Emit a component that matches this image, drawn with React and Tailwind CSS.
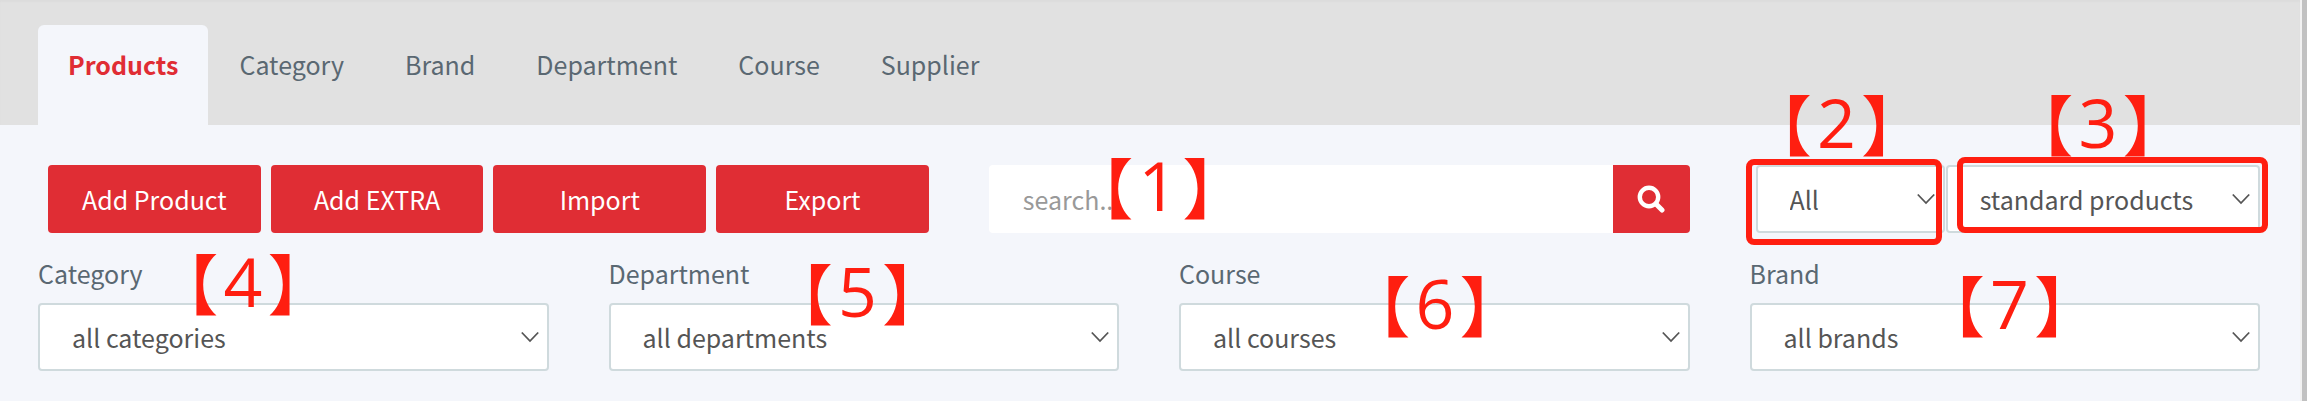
import React, { useState } from 'react';

const TABS = ['Products', 'Category', 'Brand', 'Department', 'Course', 'Supplier'];
const ACTIONS = ['Add Product', 'Add EXTRA', 'Import', 'Export'];
const FILTERS = [
  { id: 'category', label: 'Category', option: 'all categories', mark: 4, markClass: 'left-[158px] top-0' },
  { id: 'department', label: 'Department', option: 'all departments', mark: 5, markClass: 'left-[202px] top-2.5' },
  { id: 'course', label: 'Course', option: 'all courses', mark: 6, markClass: 'left-[209px] top-[22px]' },
  { id: 'brand', label: 'Brand', option: 'all brands', mark: 7, markClass: 'left-[213px] top-[22px]' },
];

function Mark({ number, className }) {
  return (
    <div
      className={`absolute z-10 flex h-[61px] w-[94px] items-center justify-center gap-[5px] whitespace-nowrap pb-1.5 text-[66px] leading-none text-[#ff1e10] pointer-events-none ${className}`}
    >
      <span>【</span>
      <span className="font-['Open_Sans',sans-serif] text-[68px] leading-none">{number}</span>
      <span>】</span>
    </div>
  );
}

function Select({ id, label, options }) {
  return (
    <div className="relative">
      <select
        id={id}
        aria-label={label}
        className="block h-[68px] w-full appearance-none rounded-[4px] border-2 border-[#cfdadd] bg-white pl-8 pr-10 text-[#555555] outline-none"
      >
        {options.map((option) => (
          <option key={option}>{option}</option>
        ))}
      </select>
      <svg
        className="absolute right-2.5 top-7 h-3 w-[18px] pointer-events-none"
        viewBox="0 0 18 12"
        fill="none"
        stroke="#555555"
        strokeWidth="1.8"
      >
        <path d="M.8 1.5 9 10 17.2 1.5" />
      </svg>
    </div>
  );
}

export default function App() {
  const [activeTab, setActiveTab] = useState('Products');
  const [search, setSearch] = useState('');

  return (
    <div className="flex min-h-screen bg-[#f4f6fb] font-['Noto_Sans_CJK_SC',sans-serif] text-[25px] leading-10 text-[#5a6872]">
      <div className="min-w-0 flex-1">
        <nav className="flex h-[125px] items-end gap-px bg-[#e1e1e1] pl-[38px] shadow-[inset_0_2px_2px_#dcdcdc]">
          {TABS.map((tab) => (
            <button
              key={tab}
              type="button"
              onClick={() => setActiveTab(tab)}
              className={`h-[100px] rounded-t-[6px] px-[30px] pb-[22px] ${
                tab === activeTab ? 'bg-[#f4f6fb] font-bold text-[#e02d34]' : ''
              }`}
            >
              {tab}
            </button>
          ))}
        </nav>

        <main className="pb-7 pl-[38px] pr-10 pt-10">
          <div className="grid grid-cols-12 gap-x-[60px]">
            <div className="col-span-5 grid grid-cols-4 gap-2.5 pl-2.5">
              {ACTIONS.map((action) => (
                <button key={action} type="button" className="h-[68px] rounded-[4px] bg-[#e02d34] text-white">
                  {action}
                </button>
              ))}
            </div>

            <form className="relative col-span-4 flex" onSubmit={(e) => e.preventDefault()}>
              <input
                type="text"
                aria-label="search"
                value={search}
                onChange={(e) => setSearch(e.target.value)}
                placeholder="search..."
                className="h-[68px] min-w-0 flex-1 rounded-l-[4px] bg-white px-[34px] outline-none placeholder:text-[#999999]"
              />
              <button
                type="submit"
                aria-label="Search"
                className="flex h-[68px] w-[77px] items-center justify-center rounded-r-[4px] bg-[#e02d34]"
              >
                <svg className="h-7 w-7" viewBox="0 0 28 28" fill="none" stroke="white">
                  <circle cx="12" cy="12" r="9.2" strokeWidth="4.4" />
                  <path d="m19 19 6 6" strokeWidth="5" strokeLinecap="round" />
                </svg>
              </button>
              <Mark number={1} className="left-[122px] top-[-8px]" />
            </form>

            <div className="relative col-span-3 flex gap-px pl-1.5">
              <div className="w-3/8">
                <Select id="scope" label="Scope" options={['All']} />
              </div>
              <div className="min-w-0 flex-1">
                <Select id="type" label="Product type" options={['standard products']} />
              </div>
              <div className="absolute -left-1 -top-1.5 h-[86px] w-[196px] rounded-[8px] border-[6px] border-[#ff1e10] pointer-events-none" />
              <div className="absolute -right-2 -top-2 h-[76px] w-[311px] rounded-[8px] border-[6px] border-[#ff1e10] pointer-events-none" />
              <Mark number={2} className="left-10 top-[-71px]" />
              <Mark number={3} className="right-[115px] top-[-71px]" />
            </div>
          </div>

          <div className="mt-5 grid grid-cols-4 gap-x-[60px]">
            {FILTERS.map((filter) => (
              <div key={filter.id} className="relative">
                <label htmlFor={filter.id} className="mb-2.5 block">
                  {filter.label}
                </label>
                <Select id={filter.id} label={filter.label} options={[filter.option]} />
                <Mark number={filter.mark} className={filter.markClass} />
              </div>
            ))}
          </div>
        </main>
      </div>
      <div className="w-[7px] border-l-2 border-[#f1f1f1] bg-[#c1c1c1]" />
    </div>
  );
}
